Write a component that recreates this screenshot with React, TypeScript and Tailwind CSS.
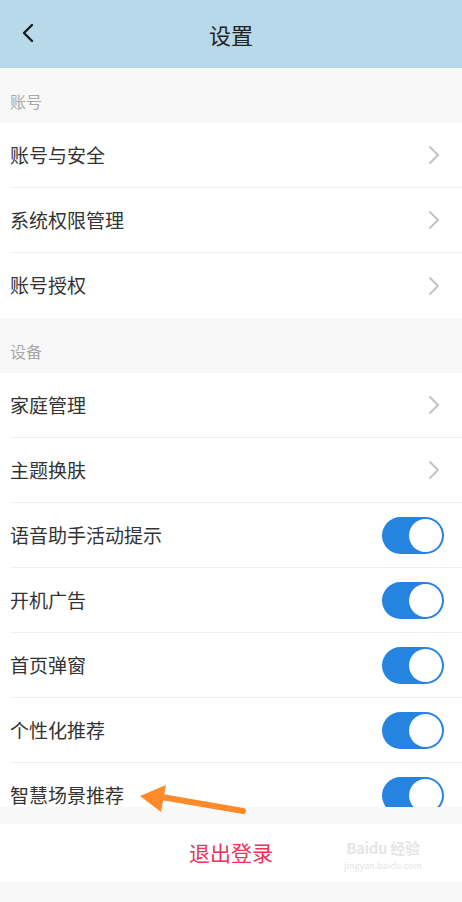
import { ChevronLeft } from 'lucide-react'

type Row = { label: string; toggle?: boolean }

const account: Row[] = [{ label: '账号与安全' }, { label: '系统权限管理' }, { label: '账号授权' }]

const device: Row[] = [
  { label: '家庭管理' },
  { label: '主题换肤' },
  { label: '语音助手活动提示', toggle: true },
  { label: '开机广告', toggle: true },
  { label: '首页弹窗', toggle: true },
  { label: '个性化推荐', toggle: true },
]

function Chevron() {
  return (
    <svg width="12" height="20" viewBox="0 0 12 20" className="mr-[22px]">
      <path d="M1.5 1.5 L10 10 L1.5 18.5" fill="none" stroke="#c4c4c4" strokeWidth="2" />
    </svg>
  )
}

function Toggle() {
  return (
    <div className="mr-[18px] flex h-[37px] w-[62px] items-center justify-end rounded-full bg-[#2484e0] pr-[2px]">
      <div className="h-[33px] w-[33px] rounded-full bg-white" />
    </div>
  )
}

function SettingRow({ row, last }: { row: Row; last?: boolean }) {
  return (
    <div className="flex h-[65px] items-center bg-white pl-[10px]">
      <div
        className={`flex h-full flex-1 items-center justify-between ${last ? '' : 'border-b border-[#f0f0f0]'}`}
      >
        <span className="text-[19px] text-[#333]">{row.label}</span>
        {row.toggle ? <Toggle /> : <Chevron />}
      </div>
    </div>
  )
}

function SectionHeader({ title }: { title: string }) {
  return (
    <div className="flex h-[55px] items-end bg-[#f8f8f8] pb-[10px] pl-[10px] text-[16px] text-[#a8a8a8]">
      {title}
    </div>
  )
}

export default function App() {
  return (
    <div
      className="relative h-[902px] w-[462px] overflow-hidden bg-[#f8f8f8]"
      style={{ fontFamily: '"Noto Sans CJK SC", "Noto Sans", sans-serif' }}
    >
      <header className="relative flex h-[68px] items-center justify-center bg-[#b8d9ea]">
        <ChevronLeft className="absolute left-[12px] top-[17px]" size={32} strokeWidth={1.8} color="#1a1a1a" />
        <h1 className="text-[22px] text-[#222]">设置</h1>
      </header>

      <SectionHeader title="账号" />
      {account.map((r, i) => (
        <SettingRow key={r.label} row={r} last={i === account.length - 1} />
      ))}

      <SectionHeader title="设备" />
      {device.map((r) => (
        <SettingRow key={r.label} row={r} />
      ))}
      <div className="h-[44px] overflow-hidden bg-white pl-[10px]">
        <div className="flex h-[65px] items-center justify-between">
          <span className="text-[19px] text-[#333]">智慧场景推荐</span>
          <Toggle />
        </div>
      </div>

      <div className="h-[17px] bg-[#f8f8f8]" />
      <div className="flex h-[58px] items-center justify-center bg-white text-[21px] text-[#f0325a]">
        退出登录
      </div>

      <svg className="absolute left-[136px] top-[784px]" width="112" height="34" viewBox="0 0 112 34">
        <path d="M20 12 L107 27" stroke="#ff8a2a" strokeWidth="6" strokeLinecap="round" />
        <path d="M4 12 L30 1 L25 28 Z" fill="#ff8a2a" />
      </svg>

      <div className="absolute left-[344px] top-[840px] flex flex-col items-center gap-[6px] leading-none text-[#e6e6e6]">
        <span className="text-[15px] font-bold tracking-tight">Baidu 经验</span>
        <span className="text-[9px]">jingyan.baidu.com</span>
      </div>
    </div>
  )
}
